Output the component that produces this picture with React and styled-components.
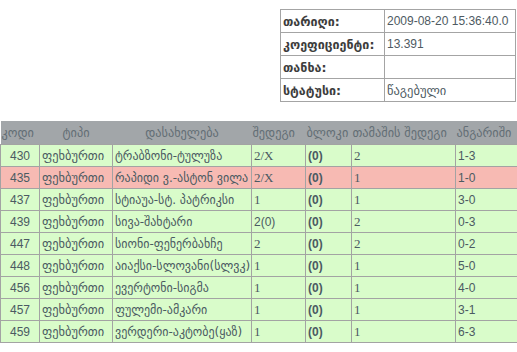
import React from 'react';
import styled, { createGlobalStyle } from 'styled-components';

const Global = createGlobalStyle`
  html, body {
    margin: 0;
    padding: 0;
    background: #fff;
    overflow: hidden;
  }
  body {
    font-family: 'Liberation Sans', 'DejaVu Sans', sans-serif;
    font-size: 12px;
  }
`

const Page = styled.div`
  width: 517px;
  height: 352px;
  display: flex;
  flex-direction: column;
  padding-top: 9px;
  box-sizing: border-box;
`

const InfoTable = styled.table`
  margin-left: 280px;
  width: 236px;
  border-collapse: collapse;
  table-layout: fixed;
  background: #fff;
`

const InfoLabel = styled.td`
  width: 99px;
  height: 22px;
  padding: 0 2px;
  border: 1px solid #a4a4a4;
  font-family: 'DejaVu Sans', sans-serif;
  font-weight: bold;
  font-size: 12.5px;
  color: #3d3d3d;
  white-space: nowrap;
  overflow: hidden;
`

const InfoValue = styled.td`
  height: 22px;
  padding: 0 2px;
  border: 1px solid #a4a4a4;
  font-size: ${p => p.$geo ? '12.5px' : '12px'};
  color: #4e5a62;
  white-space: nowrap;
  font-family: ${p => p.$geo ? "'DejaVu Sans', sans-serif" : "'Liberation Sans', sans-serif"};
`

const Games = styled.table`
  margin-top: 19px;
  width: 522px;
  border-collapse: collapse;
  table-layout: fixed;
`

const Head = styled.th`
  height: 23px;
  padding: 0 1px;
  background: #a2a6a9;
  color: #636e75;
  font-family: 'DejaVu Sans', sans-serif;
  font-weight: normal;
  font-size: 12.3px;
  text-align: ${p => p.$left ? 'left' : 'center'};
  white-space: nowrap;
  overflow: hidden;
`

const Row = styled.tr`
  background: ${p => p.$lost ? '#f7bab3' : '#d9fcca'};
`

const Cell = styled.td`
  height: 21px;
  padding: 0 2px;
  border: 1px solid #a3a3a3;
  color: #4b5a62;
  font-size: ${p => p.$geo ? '12.4px' : p.$serif ? '13px' : '12px'};
  font-family: ${p => p.$geo ? "'DejaVu Sans', sans-serif" : p.$serif ? "'Liberation Serif', serif" : "'Liberation Sans', sans-serif"};
  font-weight: ${p => p.$bold ? 'bold' : 'normal'};
  text-align: ${p => p.$center ? 'center' : 'left'};
  white-space: nowrap;
  overflow: hidden;
`

const NameCell = styled(Cell)`
  padding: 0 1px 0 2px;
  font-size: 12px;
`

const info = [
  ['თარიღი:', '2009-08-20 15:36:40.0'],
  ['კოეფიციენტი:', '13.391'],
  ['თანხა:', ''],
  ['სტატუსი:', 'წაგებული', true],
]

const games = [
  { code: 430, name: 'ტრაბზონი-ტულუზა', bet: '2/X', res: '2', score: '1-3' },
  { code: 435, name: 'რაპიდი ვ.-ასტონ ვილა', bet: '2/X', res: '1', score: '1-0', lost: true },
  { code: 437, name: 'სტიაუა-სტ. პატრიკსი', bet: '1', res: '1', score: '3-0' },
  { code: 439, name: 'სივა-შახტარი', bet: '2(0)', res: '2', score: '0-3', sans: true },
  { code: 447, name: 'სიონი-ფენერბახჩე', bet: '2', res: '2', score: '0-2' },
  { code: 448, name: 'აიაქსი-სლოვანი(სლვკ)', bet: '1', res: '1', score: '5-0' },
  { code: 456, name: 'ევერტონი-სიგმა', bet: '1', res: '1', score: '4-0' },
  { code: 457, name: 'ფულემი-ამკარი', bet: '1', res: '1', score: '3-1' },
  { code: 459, name: 'ვერდერი-აკტობე(ყაზ)', bet: '1', res: '1', score: '6-3' },
]

const App = () => {
  return (
    <Page>
      <Global />
      <InfoTable>
        <tbody>
          {info.map(([label, value, geo]) => (
            <tr key={label}>
              <InfoLabel>{label}</InfoLabel>
              <InfoValue $geo={geo}>{value}</InfoValue>
            </tr>
          ))}
        </tbody>
      </InfoTable>
      <Games>
        <colgroup>
          <col style={{ width: 39 }} />
          <col style={{ width: 73 }} />
          <col style={{ width: 139 }} />
          <col style={{ width: 54 }} />
          <col style={{ width: 46 }} />
          <col style={{ width: 104 }} />
          <col />
        </colgroup>
        <thead>
          <tr>
            <Head $left>კოდი</Head>
            <Head>ტიპი</Head>
            <Head>დასახელება</Head>
            <Head $left>შედეგი</Head>
            <Head $left>ბლოკი</Head>
            <Head $left>თამაშის შედეგი</Head>
            <Head $left>ანგარიში</Head>
          </tr>
        </thead>
        <tbody>
          {games.map(g => (
            <Row key={g.code} $lost={g.lost}>
              <Cell $center>{g.code}</Cell>
              <Cell $geo>ფეხბურთი</Cell>
              <NameCell $geo>{g.name}</NameCell>
              <Cell $serif={!g.sans}>{g.bet}</Cell>
              <Cell $bold>(0)</Cell>
              <Cell $serif>{g.res}</Cell>
              <Cell>{g.score}</Cell>
            </Row>
          ))}
        </tbody>
      </Games>
    </Page>
  )
}

export default App;
